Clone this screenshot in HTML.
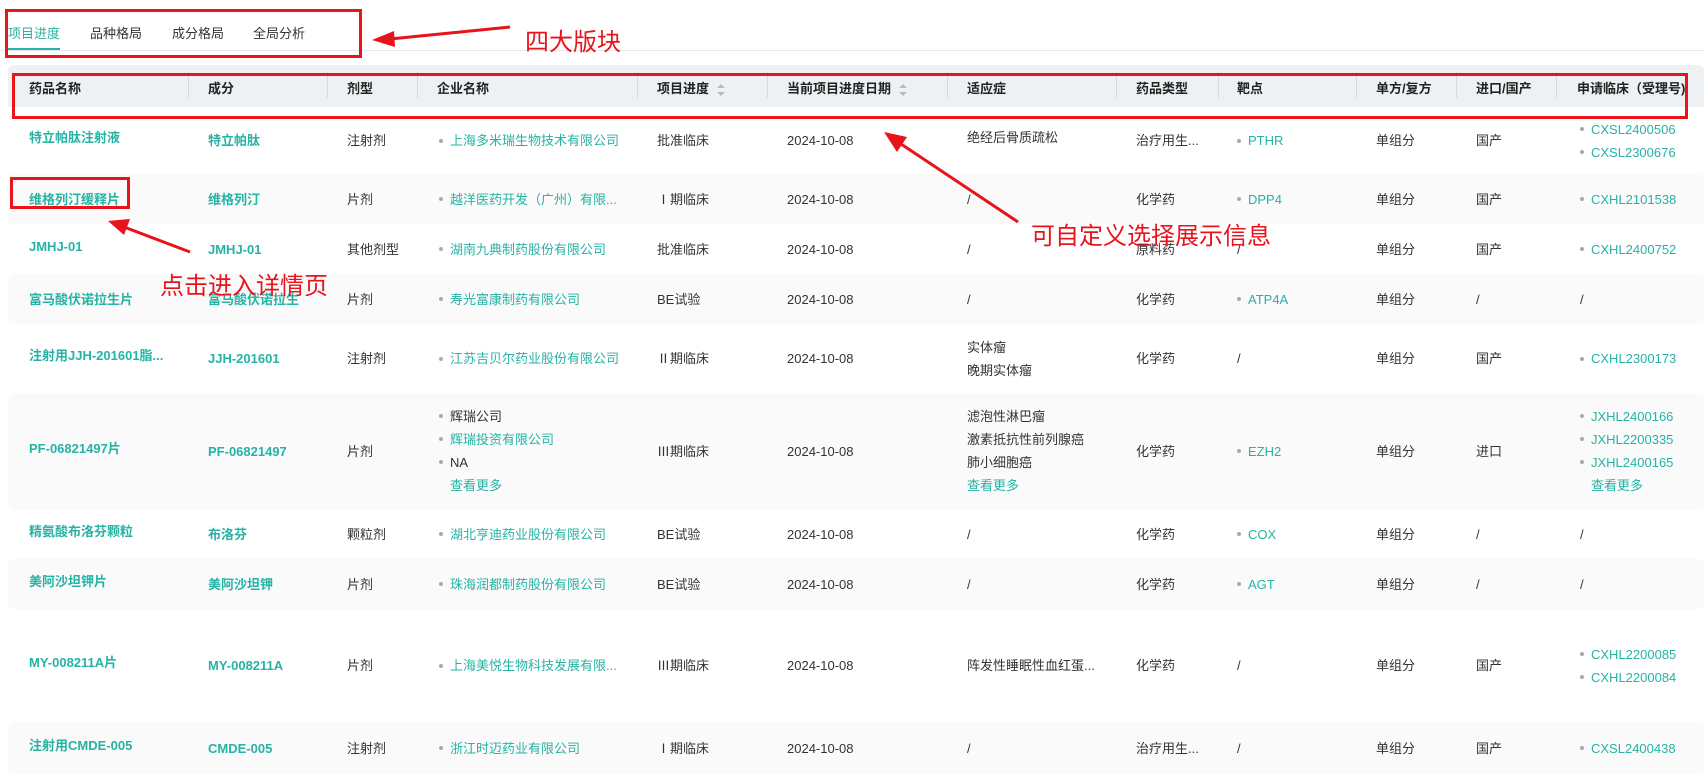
<!DOCTYPE html>
<html><head><meta charset="utf-8"><style>
*{margin:0;padding:0;box-sizing:border-box}
body{width:1704px;height:771px;overflow:hidden;background:#fff;font-family:"Liberation Sans","Noto Sans CJK SC",sans-serif;font-size:13px;color:#333;position:relative}
.abs{position:absolute}
.tab{position:absolute;top:23px;font-size:13px;color:#333}
.tabline{position:absolute;left:0;right:0;top:50px;height:1px;background:#e6e8ee}
.hdr{position:absolute;left:8px;right:0;top:65px;height:42px;background:#eef1f3;border-radius:6px 6px 0 0}
.hc{position:absolute;top:78px;font-weight:bold;font-size:13px;color:#222}
.div{position:absolute;top:72px;width:1px;height:26px;background:#d6dadd}
.row{position:absolute;left:8px;right:0}
.g{background:#fafafa;border-radius:6px}
.c{position:absolute;top:0;bottom:0;display:flex;flex-direction:column;justify-content:center;line-height:23px;white-space:nowrap}
.c.dot{flex-direction:row;align-items:center;justify-content:flex-start}
.t{color:#26b3a5}
.b{font-weight:bold}
.dot::before{content:"";display:inline-block;width:4px;height:4px;border-radius:50%;background:#aaa;margin:0 7px 3px 0;vertical-align:middle;flex:none}
.c.dot::before{margin:0 7px 0 0}
.red{position:absolute;border:3px solid #e8131b}
.ann{position:absolute;color:#e8131b;font-size:24px;white-space:nowrap}
.sort{display:inline-block;vertical-align:middle;margin-left:8px;width:8px;height:12px;position:relative}
.sort::before,.sort::after{content:"";position:absolute;left:0;border-left:4px solid transparent;border-right:4px solid transparent}
.sort::before{top:0;border-bottom:4px solid #bbb}
.sort::after{bottom:0;border-top:4px solid #bbb}
</style></head><body>
<div class="tab" style="left:8px;color:#26b3a5">项目进度</div>
<div class="abs" style="left:8px;top:48px;width:52px;height:3px;background:#26b3a5"></div>
<div class="tab" style="left:90px">品种格局</div>
<div class="tab" style="left:172px">成分格局</div>
<div class="tab" style="left:253px">全局分析</div>
<div class="tabline"></div>

<div class="hdr"></div>
<div class="hc" style="left:29px">药品名称</div>
<div class="div" style="left:188px"></div>
<div class="hc" style="left:208px">成分</div>
<div class="div" style="left:327px"></div>
<div class="hc" style="left:347px">剂型</div>
<div class="div" style="left:417px"></div>
<div class="hc" style="left:437px">企业名称</div>
<div class="div" style="left:637px"></div>
<div class="hc" style="left:657px">项目进度<span class="sort"></span></div>
<div class="div" style="left:767px"></div>
<div class="hc" style="left:787px">当前项目进度日期<span class="sort"></span></div>
<div class="div" style="left:947px"></div>
<div class="hc" style="left:967px">适应症</div>
<div class="div" style="left:1116px"></div>
<div class="hc" style="left:1136px">药品类型</div>
<div class="div" style="left:1218px"></div>
<div class="hc" style="left:1237px">靶点</div>
<div class="div" style="left:1356px"></div>
<div class="hc" style="left:1376px">单方/复方</div>
<div class="div" style="left:1456px"></div>
<div class="hc" style="left:1476px">进口/国产</div>
<div class="div" style="left:1556px"></div>
<div class="hc" style="left:1577px">申请临床（受理号)</div>

<div class="row" style="top:107px;height:67px">
<div class="c t b" style="left:21px;padding-bottom:6px">特立帕肽注射液</div><div class="c t b" style="left:200px">特立帕肽</div><div class="c" style="left:339px">注射剂</div><div class="c t dot" style="left:431px">上海多米瑞生物技术有限公司</div><div class="c" style="left:649px">批准临床</div><div class="c" style="left:779px">2024-10-08</div><div class="c" style="left:959px;padding-bottom:6px">绝经后骨质疏松</div><div class="c" style="left:1128px">治疗用生...</div><div class="c t dot" style="left:1229px">PTHR</div><div class="c" style="left:1368px">单组分</div><div class="c" style="left:1468px">国产</div><div class="c t" style="left:1572px"><div class="dot">CXSL2400506</div><div class="dot">CXSL2300676</div></div></div>

<div class="row g" style="top:174px;height:50px">
<div class="c t b" style="left:21px">维格列汀缓释片</div><div class="c t b" style="left:200px">维格列汀</div><div class="c" style="left:339px">片剂</div><div class="c t dot" style="left:431px">越洋医药开发（广州）有限...</div><div class="c" style="left:649px">Ⅰ期临床</div><div class="c" style="left:779px">2024-10-08</div><div class="c" style="left:959px">/</div><div class="c" style="left:1128px">化学药</div><div class="c t dot" style="left:1229px">DPP4</div><div class="c" style="left:1368px">单组分</div><div class="c" style="left:1468px">国产</div><div class="c t dot" style="left:1572px">CXHL2101538</div></div>

<div class="row" style="top:224px;height:50px">
<div class="c t b" style="left:21px;padding-bottom:6px">JMHJ-01</div><div class="c t b" style="left:200px">JMHJ-01</div><div class="c" style="left:339px">其他剂型</div><div class="c t dot" style="left:431px">湖南九典制药股份有限公司</div><div class="c" style="left:649px">批准临床</div><div class="c" style="left:779px">2024-10-08</div><div class="c" style="left:959px">/</div><div class="c" style="left:1128px">原料药</div><div class="c" style="left:1229px">/</div><div class="c" style="left:1368px">单组分</div><div class="c" style="left:1468px">国产</div><div class="c t dot" style="left:1572px">CXHL2400752</div></div>

<div class="row g" style="top:274px;height:50px">
<div class="c t b" style="left:21px">富马酸伏诺拉生片</div><div class="c t b" style="left:200px">富马酸伏诺拉生</div><div class="c" style="left:339px">片剂</div><div class="c t dot" style="left:431px">寿光富康制药有限公司</div><div class="c" style="left:649px">BE试验</div><div class="c" style="left:779px">2024-10-08</div><div class="c" style="left:959px">/</div><div class="c" style="left:1128px">化学药</div><div class="c t dot" style="left:1229px">ATP4A</div><div class="c" style="left:1368px">单组分</div><div class="c" style="left:1468px">/</div><div class="c" style="left:1572px">/</div></div>

<div class="row" style="top:324px;height:69px">
<div class="c t b" style="left:21px;padding-bottom:6px">注射用JJH-201601脂...</div><div class="c t b" style="left:200px">JJH-201601</div><div class="c" style="left:339px">注射剂</div><div class="c t dot" style="left:431px">江苏吉贝尔药业股份有限公司</div><div class="c" style="left:649px">Ⅱ期临床</div><div class="c" style="left:779px">2024-10-08</div><div class="c" style="left:959px"><div>实体瘤</div><div>晚期实体瘤</div></div><div class="c" style="left:1128px">化学药</div><div class="c" style="left:1229px">/</div><div class="c" style="left:1368px">单组分</div><div class="c" style="left:1468px">国产</div><div class="c t dot" style="left:1572px">CXHL2300173</div></div>

<div class="row g" style="top:393px;height:116px">
<div class="c t b" style="left:21px;padding-bottom:6px">PF-06821497片</div><div class="c t b" style="left:200px">PF-06821497</div><div class="c" style="left:339px">片剂</div><div class="c" style="left:431px"><div class="dot">辉瑞公司</div><div class="dot t">辉瑞投资有限公司</div><div class="dot">NA</div><div class="t" style="padding-left:11px">查看更多</div></div><div class="c" style="left:649px">Ⅲ期临床</div><div class="c" style="left:779px">2024-10-08</div><div class="c" style="left:959px"><div>滤泡性淋巴瘤</div><div>激素抵抗性前列腺癌</div><div>肺小细胞癌</div><div class="t">查看更多</div></div><div class="c" style="left:1128px">化学药</div><div class="c t dot" style="left:1229px">EZH2</div><div class="c" style="left:1368px">单组分</div><div class="c" style="left:1468px">进口</div><div class="c t" style="left:1572px"><div class="dot">JXHL2400166</div><div class="dot">JXHL2200335</div><div class="dot">JXHL2400165</div><div style="padding-left:11px">查看更多</div></div></div>

<div class="row" style="top:509px;height:50px">
<div class="c t b" style="left:21px;padding-bottom:6px">精氨酸布洛芬颗粒</div><div class="c t b" style="left:200px">布洛芬</div><div class="c" style="left:339px">颗粒剂</div><div class="c t dot" style="left:431px">湖北亨迪药业股份有限公司</div><div class="c" style="left:649px">BE试验</div><div class="c" style="left:779px">2024-10-08</div><div class="c" style="left:959px">/</div><div class="c" style="left:1128px">化学药</div><div class="c t dot" style="left:1229px">COX</div><div class="c" style="left:1368px">单组分</div><div class="c" style="left:1468px">/</div><div class="c" style="left:1572px">/</div></div>

<div class="row g" style="top:559px;height:50px">
<div class="c t b" style="left:21px;padding-bottom:6px">美阿沙坦钾片</div><div class="c t b" style="left:200px">美阿沙坦钾</div><div class="c" style="left:339px">片剂</div><div class="c t dot" style="left:431px">珠海润都制药股份有限公司</div><div class="c" style="left:649px">BE试验</div><div class="c" style="left:779px">2024-10-08</div><div class="c" style="left:959px">/</div><div class="c" style="left:1128px">化学药</div><div class="c t dot" style="left:1229px">AGT</div><div class="c" style="left:1368px">单组分</div><div class="c" style="left:1468px">/</div><div class="c" style="left:1572px">/</div></div>

<div class="row" style="top:609px;height:113px">
<div class="c t b" style="left:21px;padding-bottom:6px">MY-008211A片</div><div class="c t b" style="left:200px">MY-008211A</div><div class="c" style="left:339px">片剂</div><div class="c t dot" style="left:431px">上海美悦生物科技发展有限...</div><div class="c" style="left:649px">Ⅲ期临床</div><div class="c" style="left:779px">2024-10-08</div><div class="c" style="left:959px">阵发性睡眠性血红蛋...</div><div class="c" style="left:1128px">化学药</div><div class="c" style="left:1229px">/</div><div class="c" style="left:1368px">单组分</div><div class="c" style="left:1468px">国产</div><div class="c t" style="left:1572px"><div class="dot">CXHL2200085</div><div class="dot">CXHL2200084</div></div></div>

<div class="row g" style="top:722px;height:52px">
<div class="c t b" style="left:21px;padding-bottom:6px">注射用CMDE-005</div><div class="c t b" style="left:200px">CMDE-005</div><div class="c" style="left:339px">注射剂</div><div class="c t dot" style="left:431px">浙江时迈药业有限公司</div><div class="c" style="left:649px">Ⅰ期临床</div><div class="c" style="left:779px">2024-10-08</div><div class="c" style="left:959px">/</div><div class="c" style="left:1128px">治疗用生...</div><div class="c" style="left:1229px">/</div><div class="c" style="left:1368px">单组分</div><div class="c" style="left:1468px">国产</div><div class="c t dot" style="left:1572px">CXSL2400438</div></div>

<div class="red" style="left:5px;top:9px;width:357px;height:49px"></div>
<div class="red" style="left:12px;top:73px;width:1676px;height:46px"></div>
<div class="red" style="left:10px;top:177px;width:120px;height:32px"></div>
<div class="ann" style="left:525px;top:22px">四大版块</div>
<div class="ann" style="left:1031px;top:216px">可自定义选择展示信息</div>
<div class="ann" style="left:160px;top:266px">点击进入详情页</div>
<svg class="abs" style="left:0;top:0" width="1704" height="771">
<g stroke="#e8131b" stroke-width="3" fill="#e8131b">
<line x1="510" y1="27" x2="390" y2="39"/><polygon points="372,40 394,31 395,47" stroke="none"/>
<line x1="1018" y1="222" x2="898" y2="142"/><polygon points="884,132 907,137 897,152" stroke="none"/>
<line x1="190" y1="252" x2="124" y2="227"/><polygon points="108,221 130,219 124,235" stroke="none"/>
</g></svg>
</body></html>
